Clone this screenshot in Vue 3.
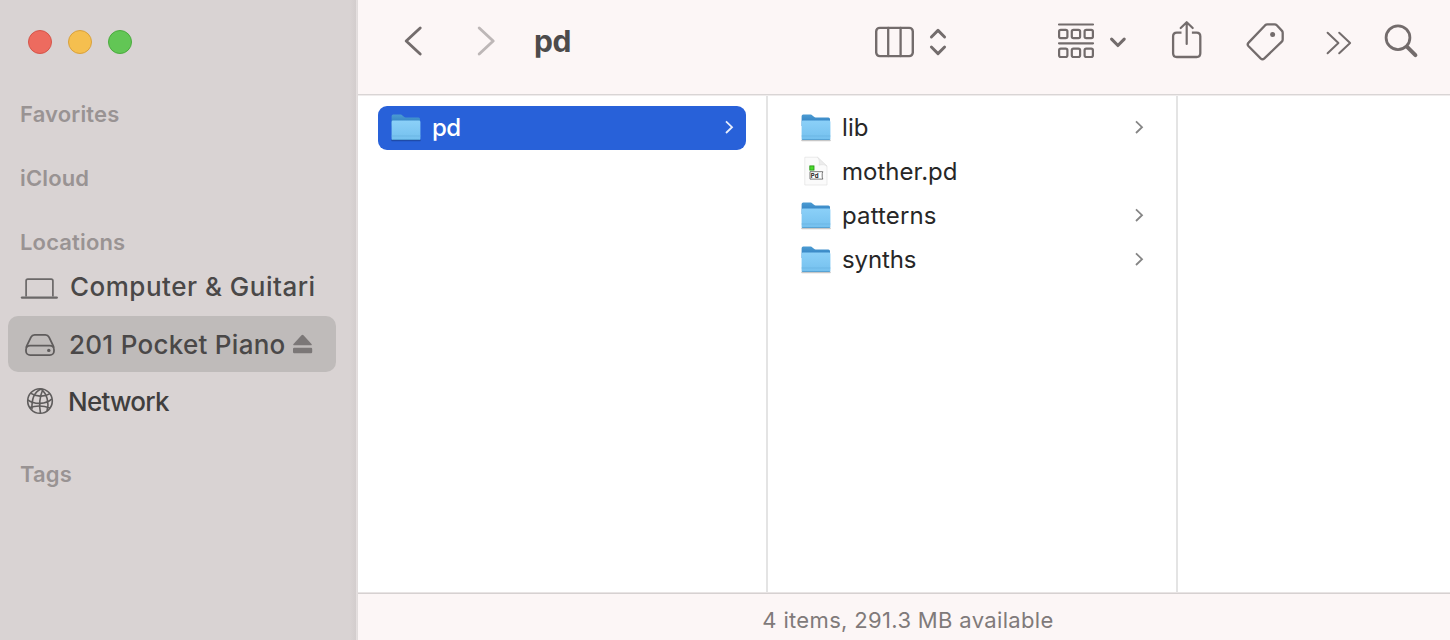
<script setup>
const files = [
  { name: 'lib', folder: true, width: 26.5 },
  { name: 'mother.pd', folder: false, width: 115.5 },
  { name: 'patterns', folder: true, width: 94.5 },
  { name: 'synths', folder: true, width: 74.5 },
]
</script>

<template>
  <div class="window">
    <svg width="0" height="0" class="defs">
      <defs>
        <linearGradient id="front" x1="0" y1="0" x2="0" y2="1">
          <stop offset="0" stop-color="#8bd0f8" />
          <stop offset="1" stop-color="#74c0ee" />
        </linearGradient>
        <linearGradient id="back" x1="0" y1="0" x2="0" y2="1">
          <stop offset="0" stop-color="#4b9bd2" />
          <stop offset="1" stop-color="#2b79bd" />
        </linearGradient>
        <symbol id="folder" viewBox="0 0 32 32">
          <path d="M2 28.400h28" stroke="#000" stroke-opacity=".22" stroke-width="1.600" stroke-linecap="round" />
          <path d="M1.600 4.200q0-1.600 1.600-1.600h7.400q1 0 1.800.8l1.600 1.400q.7.6 1.600.6h12.800q1.600 0 1.600 1.600V14H1.600z" fill="url(#back)" />
          <path d="M1.600 10q0-1.400 1.400-1.400h26q1.400 0 1.400 1.400v16.700q0 1.300-1.300 1.300H2.900q-1.300 0-1.300-1.300z" fill="url(#front)" />
          <path d="M1.600 24h28.800" stroke="#69b3e1" stroke-width=".7" />
          <path d="M2.200 27.500h27.600" stroke="#559fd0" stroke-width=".9" />
        </symbol>
      </defs>
    </svg>

    <aside class="sidebar">
      <div class="lights"><i class="red" /><i class="yellow" /><i class="green" /></div>
      <h2 class="fav">Favorites</h2>
      <h2 class="cloud">iCloud</h2>
      <h2 class="loc">Locations</h2>
      <div class="place computer">
        <svg viewBox="16 258 48 56" width="48" height="56" fill="none" stroke="#6b6868">
          <path d="M26.100 296.500v-15.700q0-1.700 1.700-1.700h23.400q1.700 0 1.700 1.700v15.700" stroke-width="1.700" />
          <path d="M22 297.600h34.700" stroke-width="2.400" stroke-linecap="round" />
        </svg>
        <span>Computer &amp; Guitari</span>
      </div>
      <div class="place selected">
        <svg viewBox="16 316 48 56" width="48" height="56" fill="none" stroke="#5f5c5c" stroke-width="1.800">
          <path d="M26.200 347.800q.2-1.200.8-2.400l4-8.200q1.100-2.300 3.600-2.300h10.800q2.500 0 3.600 2.300l4 8.200q.6 1.200.8 2.400" />
          <rect x="26" y="345.600" width="28" height="9.600" rx="4.200" />
          <circle cx="48.800" cy="350.400" r="1.700" fill="#5f5c5c" stroke="none" />
        </svg>
        <span>201 Pocket Piano</span>
        <svg class="eject" viewBox="292 334 22 22" width="22" height="22" fill="#7b7777">
          <path d="M302.500 335.800q.6 0 1 .4l8 8.700q1 1.300-.5 1.300h-17q-1.500 0-.5-1.300l8-8.700q.4-.4 1-.4z" />
          <rect x="293" y="348.800" width="19.200" height="5.400" rx="1.200" />
        </svg>
      </div>
      <div class="place network">
        <svg viewBox="16 373 48 56" width="48" height="56" fill="none" stroke="#5f5c5c" stroke-width="1.600">
          <circle cx="40" cy="401" r="12.300" />
          <path d="M43 389q-5 11.500-2.500 24.300M41 389c-7 3-9.500 11-9 20.500M41 388.800c6 5 8.500 14 6 22.200" />
          <path d="M30.500 393.200c5 3.600 14 4 19.500.5M27.800 399.800c7 5.200 18 4.600 24.200-1M29.500 407.600c6-2 14-2 20.600.4" />
        </svg>
        <span>Network</span>
      </div>
      <h2 class="tags">Tags</h2>
    </aside>

    <main class="main">
      <header class="toolbar">
        <svg viewBox="358 0 92 94" width="92" height="94" stroke-width="2.900"><path d="M420.200 28 406.200 41l14 13" /></svg>
        <svg class="dim" viewBox="450 0 84 94" width="84" height="94" stroke-width="2.900"><path d="m479.200 28 14 13-14 13" /></svg>
        <h1>pd</h1>
        <svg viewBox="864 0 186 94" width="186" height="94">
          <rect x="876.200" y="27.900" width="36.600" height="28.200" rx="3.600" stroke-width="2.400" />
          <path d="M888.200 28v28M900.600 28v28" stroke-width="2.300" />
          <path d="m931.400 37 6.600-6.600 6.600 6.600M931.400 47l6.600 6.600 6.600-6.600" stroke-width="2.900" />
        </svg>
        <svg viewBox="1050 0 112 94" width="112" height="94" stroke-width="2.200">
          <path d="M1059 24.500h34M1059 43.300h34" />
          <rect x="1059.100" y="29.900" width="8.300" height="8.300" rx="1.700" />
          <rect x="1071.800" y="29.900" width="8.300" height="8.300" rx="1.700" />
          <rect x="1084.600" y="29.900" width="8.300" height="8.300" rx="1.700" />
          <rect x="1059.100" y="48.700" width="8.300" height="8.300" rx="1.700" />
          <rect x="1071.800" y="48.700" width="8.300" height="8.300" rx="1.700" />
          <rect x="1084.600" y="48.700" width="8.300" height="8.300" rx="1.700" />
          <path d="m1111.600 39.200 6.300 6.300 6.300-6.300" stroke-width="3.100" />
        </svg>
        <svg viewBox="1162 0 72 94" width="72" height="94" stroke-width="2.300">
          <path d="M1181.500 32.600h-4.700q-3.700 0-3.700 3.700v17q0 3.700 3.700 3.700h19.800q3.700 0 3.700-3.700v-17q0-3.700-3.700-3.700h-4.700" stroke-linecap="butt" />
          <path d="M1186.700 44V22.500M1180.700 28l6-5.800 6 5.800" stroke-width="2.200" />
        </svg>
        <svg viewBox="1234 0 80 94" width="80" height="94" stroke-width="2.300">
          <path d="M1265.200 25.200q.9-.8 2.200-.8h7.200q1.300 0 2.200.9l5 5.300q.9.900.9 2.200v6.600q0 1.300-.9 2.200l-17.400 16.800q-1.900 1.800-3.800 0l-12-12.100q-1.800-1.900 0-3.700z" />
          <circle cx="1272.600" cy="34.500" r="2.500" class="solid" />
        </svg>
        <svg viewBox="1314 0 60 94" width="60" height="94" stroke-width="2"><path d="m1327.600 32.800 10.800 10.200-10.800 10.200M1339.200 32.800l10.900 10.200-10.900 10.200" /></svg>
        <svg viewBox="1374 0 76 94" width="76" height="94">
          <circle cx="1398" cy="37.700" r="11.900" stroke-width="2.800" />
          <path d="m1407.400 47.200 8 7.900" stroke-width="4" />
        </svg>
      </header>

      <section class="browser">
        <div class="column first">
          <div class="row active">
            <svg class="icon" width="32" height="32"><use href="#folder" /></svg>
            <svg class="name" width="40" height="44"><text x="0" y="30" textLength="29">pd</text></svg>
            <svg class="chev" viewBox="0 0 10 14" width="10" height="14"><path d="m2 1.400 6 5.800-6 5.800" /></svg>
          </div>
        </div>
        <div class="column second">
          <div v-for="f in files" :key="f.name" class="row">
            <svg v-if="f.folder" class="icon" width="32" height="32"><use href="#folder" /></svg>
            <svg v-else class="icon doc" viewBox="0 0 32 32" width="32" height="32">
              <path d="M4.800 2.200h12.700l9.500 9V30H4.800z" fill="#fbfbfb" stroke="#e2e2e2" stroke-width=".7" />
              <path d="M17.500 2.200c2 2.500 2.200 5 1.400 8 3-.8 6-.7 8.100 1z" fill="#ececec" stroke="#dcdcdc" stroke-width=".5" />
              <rect x="9.800" y="10.900" width="4.200" height="4.200" fill="#4bdb2d" stroke="#249211" stroke-width=".8" />
              <path d="M10 16.700h12.800l-.6 2v3.400l.6 2H10z" fill="#fff" stroke="#555" stroke-width=".8" />
              <text x="10.800" y="22.700" class="tiny">Pd</text>
            </svg>
            <svg class="name" width="160" height="44"><text x="0" y="30" :textLength="f.width">{{ f.name }}</text></svg>
            <svg v-if="f.folder" class="chev" viewBox="0 0 10 14" width="10" height="14"><path d="m2 1.400 6 5.800-6 5.800" /></svg>
          </div>
        </div>
        <div class="column last" />
      </section>
      <footer class="status"><span>4 items, 291.3 MB available</span></footer>
    </main>
  </div>
</template>

<style>
body { margin: 0; overflow: hidden; }
</style>

<style scoped>
.window { display: flex; width: 1450px; height: 640px; font-family: Inter, "Liberation Sans", sans-serif; background: #fff; overflow: hidden; }
.defs { position: absolute; }
h1, h2 { margin: 0; }
svg { display: block; flex: none; }
.sidebar { box-sizing: border-box; width: 358px; flex: none; padding-top: 30px; background: linear-gradient(90deg, #d9d3d3 0, #d9d3d3 350px, #d3cdcd 356px, #e6e1e1 356px, #e0dada 358px); }
.lights { display: flex; gap: 16px; margin-left: 28px; height: 24px; }
.lights i { box-sizing: border-box; width: 24px; height: 24px; border-radius: 50%; border: 1px solid; }
.lights .red { background: #ed6b5f; border-color: #d5554a; }
.lights .yellow { background: #f5bf4f; border-color: #d9a13c; }
.lights .green { background: #62c655; border-color: #4bab3e; }
h2 { height: 28px; line-height: 28px; padding-left: 20px; font-size: 22px; font-weight: 600; letter-spacing: .15px; color: #999393; white-space: nowrap; }
.fav { margin-top: 46px; }
.cloud { margin-top: 36px; }
.loc { margin-top: 36px; }
.tags { margin-top: 31px; }
.place { box-sizing: border-box; display: flex; align-items: center; margin: 0 22px 0 8px; height: 56px; padding-left: 8px; font-size: 26px; font-weight: 500; color: #4a4848; white-space: nowrap; border-radius: 10px; }
.computer { margin-top: 2px; }
.computer span { margin-left: 6px; letter-spacing: .5px; }
.selected { margin-top: 2px; background: #bfbbba; }
.selected span { margin-left: 5px; width: 223px; letter-spacing: .28px; }
.network { margin-top: 1px; color: #403e3e; }
.network span { margin-left: 4px; font-weight: 450; letter-spacing: -.75px; }
.main { display: flex; flex-direction: column; width: 1092px; }
.toolbar { box-sizing: border-box; display: flex; height: 96px; background: #fcf6f6; border-bottom: 1px solid #efecec; box-shadow: inset 0 -1px #d9d5d5; }
.toolbar svg { fill: none; stroke: #736c6c; stroke-linecap: round; stroke-linejoin: round; }
.toolbar svg.dim { stroke: #bdb7b7; }
.toolbar .solid { fill: #736c6c; stroke: none; }
h1 { width: 330px; font-size: 30px; line-height: 83px; font-weight: 700; letter-spacing: -.4px; color: #4d4b4b; }
.browser { display: flex; height: 496px; }
.column { box-sizing: border-box; padding: 10px 20px 0; border-right: 2px solid #e4e4e4; }
.first { width: 410px; }
.second { width: 410px; }
.last { width: 272px; border: 0; }
.row { box-sizing: border-box; display: flex; align-items: center; height: 44px; padding: 0 12px; border-radius: 9px; }
.active { background: #2861d9; }
.doc { margin-top: -2px; }
.name { margin-left: 10px; overflow: visible; }
.name text { font-size: 24px; fill: #272727; }
.active .name text { fill: #fff; font-weight: 500; }
.tiny { font-size: 6px; font-weight: 700; fill: #222; }
.chev { margin-left: auto; fill: none; stroke: #858585; stroke-width: 1.8; position: relative; top: -1px; }
.active .chev { stroke: #e8eefc; }
.status { box-sizing: border-box; flex: 1; border-top: 1px solid #e8e4e4; box-shadow: inset 0 1px #d6d1d1; background: #fcf6f6; display: flex; justify-content: center; padding-top: 13px; padding-left: 8px; }
.status span { font-size: 22px; line-height: 28px; letter-spacing: .34px; color: #807a7a; white-space: nowrap; }
</style>
